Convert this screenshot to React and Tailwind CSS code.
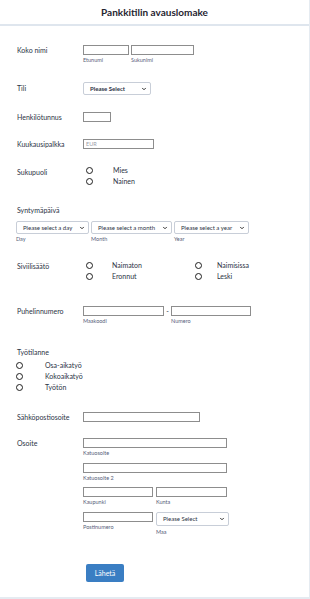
import React from 'react';
import { ChevronDown } from 'lucide-react';

const font = { fontFamily: 'Lato, "Open Sans", sans-serif' };

const Label = ({ children, lh = 'leading-[10px]' }) => (
  <div className={`w-[66px] shrink-0 text-[7px] text-[#2c3345] ${lh}`}>{children}</div>
);

const Input = ({ w, placeholder }) => (
  <div className={`${w} h-[10px] border border-[#8d8d8d] bg-white flex items-center pl-[2px] text-[5.5px] text-[#9aa0aa]`}>
    {placeholder}
  </div>
);

const Sub = ({ children, className = '' }) => (
  <div className={`text-[5.5px] leading-none text-[#57607a] mt-[3px] ${className}`}>{children}</div>
);

const Select = ({ w, h = 'h-[13px]', text, bold }) => (
  <div className={`${w} ${h} border border-[#c8ced8] rounded-[2px] bg-white flex items-center justify-between pl-[6px] pr-[3px] text-[6px] text-[#2c3345] ${bold ? 'font-bold' : ''}`}>
    <span className="whitespace-nowrap">{text}</span>
    <ChevronDown size={6} strokeWidth={4} className="text-[#333]" />
  </div>
);

const Radio = ({ label, gap = 'w-[20px]' }) => (
  <div className="flex items-center h-[11px]">
    <div className="w-[7px] h-[7px] rounded-full border-[1.5px] border-[#1f1f1f] shrink-0" />
    <div className={`${gap} shrink-0`} />
    <span className="text-[7px] text-[#2c3345] leading-none">{label}</span>
  </div>
);

const Row = ({ h, children, className = '' }) => (
  <div className={`flex pl-[17px] ${h} ${className}`}>{children}</div>
);

export default function App() {
  return (
    <div className="min-h-screen bg-[#e5ebf1]" style={font}>
      <div className="w-[309px] h-[597px] bg-white flex flex-col">
        <div className="h-[24px] flex items-center justify-center text-[10px] font-bold text-[#1f2430]">
          Pankkitilin avauslomake
        </div>
        <div className="h-[2px] bg-[#dfe6ee]" />

        <div className="h-[19px]" />

        {/* Koko nimi */}
        <Row h="h-[37px]">
          <Label>Koko nimi</Label>
          <div>
            <Input w="w-[46px]" />
            <Sub>Etunumi</Sub>
          </div>
          <div className="ml-[2px]">
            <Input w="w-[63px]" />
            <Sub>Sukunimi</Sub>
          </div>
        </Row>

        {/* Tili */}
        <Row h="h-[30px]">
          <Label lh="leading-[12px]">Tili</Label>
          <Select w="w-[68px]" text="Please Select" bold />
        </Row>

        <Row h="h-[27px]">
          <Label>Henkilötunnus</Label>
          <Input w="w-[28px]" />
        </Row>

        <Row h="h-[28px]">
          <Label>Kuukausipalkka</Label>
          <Input w="w-[71px]" placeholder="EUR" />
        </Row>

        {/* Sukupuoli */}
        <Row h="h-[39px]">
          <Label lh="leading-[11px]">Sukupuoli</Label>
          <div className="pl-[3px] -mt-[2px]">
            <Radio label="Mies" />
            <Radio label="Nainen" />
          </div>
        </Row>

        {/* Syntymäpäivä */}
        <div className="h-[56px] pl-[16px]">
          <div className="text-[7px] leading-[8px] text-[#2c3345] pl-[1px]">Syntymäpäivä</div>
          <div className="flex gap-[2px] mt-[7px]">
            <div>
              <Select w="w-[73px]" text="Please select a day" />
              <Sub>Day</Sub>
            </div>
            <div>
              <Select w="w-[81px]" text="Please select a month" />
              <Sub>Month</Sub>
            </div>
            <div>
              <Select w="w-[75px]" text="Please select a year" />
              <Sub>Year</Sub>
            </div>
          </div>
        </div>

        {/* Siviilisäätö */}
        <Row h="h-[44px]">
          <Label lh="leading-[11px] mt-[-1px]">Siviilisäätö</Label>
          <div className="pl-[3px] -mt-[2px] flex">
            <div className="w-[109px]">
              <Radio label="Naimaton" gap="w-[19px]" />
              <Radio label="Eronnut" gap="w-[19px]" />
            </div>
            <div>
              <Radio label="Naimisissa" gap="w-[15px]" />
              <Radio label="Leski" gap="w-[15px]" />
            </div>
          </div>
        </Row>

        {/* Puhelinnumero */}
        <Row h="h-[42px]">
          <Label>Puhelinnumero</Label>
          <div>
            <Input w="w-[81px]" />
            <Sub>Maakoodi</Sub>
          </div>
          <div className="w-[7px] text-center text-[7px] leading-[10px] text-[#2c3345]">-</div>
          <div>
            <Input w="w-[80px]" />
            <Sub>Numero</Sub>
          </div>
        </Row>

        {/* Työtilanne */}
        <div className="h-[64px] pl-[16px]">
          <div className="text-[7px] leading-[8px] text-[#2c3345] pl-[1px]">Työtilanne</div>
          <div className="mt-[4px]">
            <Radio label="Osa-aikatyö" gap="w-[22px]" />
            <Radio label="Kokoaikatyö" gap="w-[22px]" />
            <Radio label="Työtön" gap="w-[22px]" />
          </div>
        </div>

        <Row h="h-[26px]">
          <Label>Sähköpostiosoite</Label>
          <Input w="w-[117px]" />
        </Row>

        {/* Osoite */}
        <Row h="h-[126px]">
          <Label lh="leading-[11px]">Osoite</Label>
          <div>
            <Input w="w-[144px]" />
            <Sub>Katuosoite</Sub>
            <div className="mt-[6px]">
              <Input w="w-[144px]" />
              <Sub>Katuosoite 2</Sub>
            </div>
            <div className="flex gap-[3px] mt-[6px]">
              <div>
                <Input w="w-[70px]" />
                <Sub>Kaupunki</Sub>
              </div>
              <div>
                <Input w="w-[71px]" />
                <Sub>Kunta</Sub>
              </div>
            </div>
            <div className="flex gap-[3px] mt-[6px]">
              <div>
                <Input w="w-[70px]" />
                <Sub>Postinumero</Sub>
              </div>
              <div>
                <Select w="w-[73px]" h="h-[14px]" text="Please Select" />
                <Sub className="mt-[4px]">Maa</Sub>
              </div>
            </div>
          </div>
        </Row>

        <div className="pl-[86px]">
          <button className="w-[38px] h-[18px] bg-[#3a7ec3] rounded-[2px] text-white text-[7px] flex items-center justify-center">
            Lähetä
          </button>
        </div>
      </div>
    </div>
  );
}
